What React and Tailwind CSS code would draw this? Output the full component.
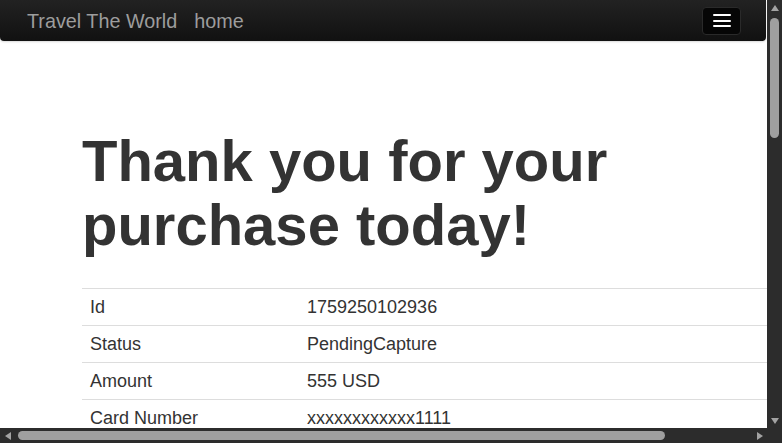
import React from "react";

const rows = [
  ["Id", "1759250102936"],
  ["Status", "PendingCapture"],
  ["Amount", "555 USD"],
  ["Card Number", "xxxxxxxxxxxx1111"],
];

function Tri({ dir }) {
  const pts = {
    up: "0,6 4,0 8,6",
    down: "0,0 8,0 4,6",
    left: "6,0 6,8 0,4",
    right: "0,0 0,8 6,4",
  }[dir];
  const horiz = dir === "left" || dir === "right";
  return (
    <svg width={horiz ? 6 : 8} height={horiz ? 8 : 6} viewBox={horiz ? "0 0 6 8" : "0 0 8 6"}>
      <polygon points={pts} fill="#a3a3a3" />
    </svg>
  );
}

export default function App() {
  return (
    <div
      className="w-[782px] h-[443px] flex flex-col overflow-hidden bg-white"
      style={{ fontFamily: '"Liberation Sans", Arial, Helvetica, sans-serif' }}
    >
      <div className="flex flex-1 min-h-0">
        {/* page viewport */}
        <div className="flex-1 min-w-0 overflow-hidden flex flex-col">
          <nav className="h-[41px] w-[766px] shrink-0 flex items-center rounded-b-[4px] bg-[linear-gradient(to_bottom,#222222,#111111)] shadow-[0_1px_2px_rgba(0,0,0,0.15)]">
            <span className="ml-[27px] pt-[2px] text-[19.8px] leading-none text-[#9d9d9d]">Travel The World</span>
            <span className="ml-[17px] pt-[2px] text-[19.8px] leading-none text-[#9d9d9d]">home</span>
            <div className="ml-auto mr-[25px] w-[39px] h-[28px] rounded-[4px] border border-[#2a2a2a] bg-[#060606] flex flex-col items-center justify-center gap-[3.5px]">
              <span className="block w-[18px] h-[2px] bg-white rounded-[1px]" />
              <span className="block w-[18px] h-[2px] bg-white rounded-[1px]" />
              <span className="block w-[18px] h-[2px] bg-white rounded-[1px]" />
            </div>
          </nav>
          <div className="pl-[82px] shrink-0">
            <h1 className="mt-[88px] text-[58px] leading-[64px] font-bold text-[#333333]">
              Thank you for your
              <br />
              purchase today!
            </h1>
            <table className="mt-[31px] w-[780px] border-collapse text-[18px] leading-[20px] text-[#333333]">
              <tbody>
                {rows.map(([k, v]) => (
                  <tr key={k} className="border-t border-[#dddddd]">
                    <td className="w-[217px] p-[8px]">{k}</td>
                    <td className="p-[8px]">{v}</td>
                  </tr>
                ))}
              </tbody>
            </table>
          </div>
        </div>
        {/* vertical scrollbar */}
        <div className="w-[15px] shrink-0 bg-[#2c2c2c] flex flex-col items-center">
          <div className="h-[15px] flex items-center justify-center pt-[1px]">
            <Tri dir="up" />
          </div>
          <div className="mt-[3px] w-[9px] h-[120px] rounded-full bg-[#9f9f9f]" />
          <div className="mt-auto h-[15px] flex items-center justify-center">
            <Tri dir="down" />
          </div>
        </div>
      </div>
      <div className="h-[15px] shrink-0 flex bg-[#2c2c2c]">
        <div className="flex-1 flex items-center">
          <div className="w-[15px] flex items-center justify-center">
            <Tri dir="left" />
          </div>
          <div className="ml-[3px] w-[647px] h-[9px] rounded-full bg-[#9f9f9f]" />
          <div className="ml-auto w-[15px] flex items-center justify-center">
            <Tri dir="right" />
          </div>
        </div>
        <div className="w-[15px] bg-[#2c2c2c]" />
      </div>
    </div>
  );
}
